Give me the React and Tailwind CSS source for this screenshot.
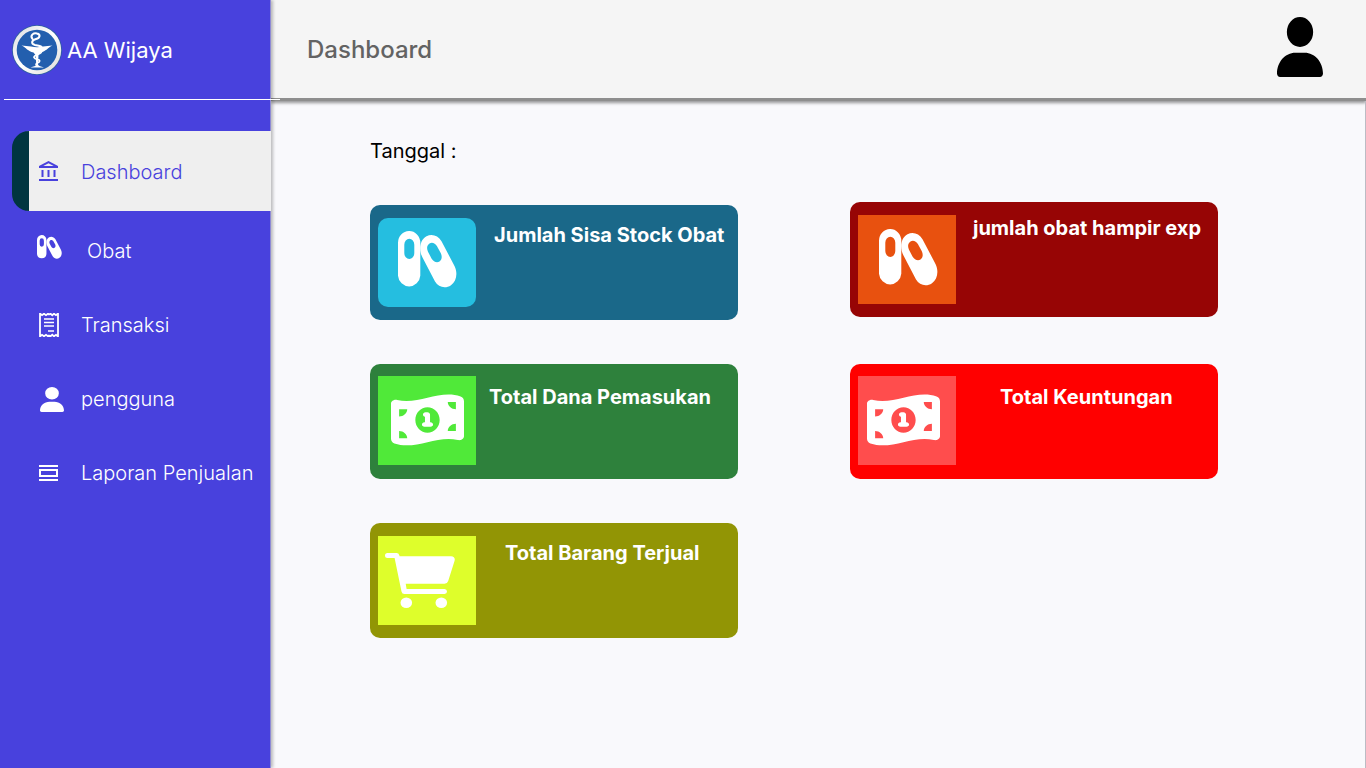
import { FaUser, FaMoneyBill1Wave } from "react-icons/fa6";
import { MdOutlineAccountBalance } from "react-icons/md";

function Logo() {
  return (
    <svg viewBox="0 0 50 50" className="size-[50px] shrink-0" aria-hidden="true">
      <defs>
        <linearGradient id="ring" x1="0" y1="0" x2="1" y2="1">
          <stop offset="0" stopColor="#d9dce0" />
          <stop offset="0.5" stopColor="#ffffff" />
          <stop offset="1" stopColor="#dcdad6" />
        </linearGradient>
      </defs>
      <circle cx="25" cy="25" r="25" fill="#2c5f9e" />
      <circle cx="25" cy="25" r="24.2" fill="url(#ring)" />
      <circle cx="25" cy="25" r="20.3" fill="#235fae" />
      <g fill="none" stroke="#fff" strokeLinecap="round">
        <path d="M20.5 14C17.500 10 22 7.500 25 8.500C29 9.500 28 13 24 14C19 15.500 19 19 23 20C27.500 21 30 20.500 30 24" strokeWidth="2" />
        <path d="M29.500 26C30.500 30 21.500 29 22 32.500C23 35.500 28.500 33.500 27.500 36.500C27 38 24 37.500 24 39.500" strokeWidth="1.700" />
      </g>
      <path d="M9.500 20.500L19 21.500Q25 23 31 21.500L40.500 20.500C36 22.500 34 26.500 28.500 27.500L26.500 30L26 39.500C26.500 41 29 41.500 32 42.500H18.500C21.500 41.500 24 41 24.300 39.500L23.500 30L21.500 27.500C16 26.500 14 22.500 9.500 20.500Z" fill="#fff" />
    </svg>
  );
}

function Capsules({ className }) {
  return (
    <svg viewBox="0 0 59 58" preserveAspectRatio="none" className={className} fill="none" strokeLinecap="round" aria-hidden="true">
      <path
        fill="currentColor"
        fillRule="evenodd"
        d="M11 0A11.200 12 0 0 1 22.300 12V45.500A11.200 12 0 0 1 0 45.500V12A11.200 12 0 0 1 11 0ZM11.300 8A5 6 0 0 0 6.300 14V22.500A5 6 0 0 0 16.300 22.500V14A5 6 0 0 0 11.300 8Z"
      />
      <path
        fill="currentColor"
        fillRule="evenodd"
        d="M28.500 5.300C34 2.500 40 4.500 43.500 10.500L56.500 35.500C60 43 58.500 51 53 55.200C47.500 59 40.500 57.500 37 51.500L24.500 27C20.500 19 21.500 9.500 28.500 5.300ZM31.500 12.600C28.800 14.500 28.500 18 30 21L33.500 28C35.500 31.500 39 32.700 41.500 31C44.200 29 44.200 25.500 42.700 22.500L39 15.500C37.200 12.200 34 11 31.500 12.600Z"
      />
    </svg>
  );
}

function Cart({ className }) {
  return (
    <svg viewBox="0 0 70 56" className={className} fill="currentColor" aria-hidden="true">
      <path
        fillRule="evenodd"
        d="M2.500 0H11.500Q13.800 0 14.300 2.200L14.600 3.300H66Q70.500 3.800 69.600 7.800L63.200 28Q62.300 30.800 59.500 30.800H20.700L21.600 36H59.500A2.500 2.500 0 0 1 59.500 41H19.500Q17 41 16.500 38.500L9.600 5H2.500A2.500 2.500 0 0 1 2.500 0Z"
      />
      <ellipse cx="21.300" cy="49.800" rx="5.800" ry="5.300" />
      <ellipse cx="56.300" cy="49.800" rx="5.800" ry="5.300" />
    </svg>
  );
}

function ReceiptIcon() {
  return (
    <svg viewBox="0 0 20 24" className="h-6 w-5" fill="none" stroke="currentColor" aria-hidden="true">
      <path d="M1 0.500L3 2.200L5 0.700L7 2.200L9 0.700L10 1.500L11.500 0.700L13.300 2.200L15 0.700L17 2.200L19 0.500V23.500L17 21.800L15 23.300L13.300 21.800L11.500 23.300L10 22.500L9 23.300L7 21.800L5 23.300L3 21.800L1 23.500Z" strokeWidth="1.800" />
      <path d="M5 6H15M5 9.500H15M5 13H15M9 18H15" strokeWidth="1.700" />
    </svg>
  );
}

function ReportIcon() {
  return (
    <svg viewBox="0 0 19 16" className="h-4 w-[19px]" fill="none" stroke="currentColor" strokeWidth="2" aria-hidden="true">
      <path d="M0 1H19M0 15H19M1 5H18V11H1Z" />
    </svg>
  );
}

const links = [
  { label: "Obat", icon: <Capsules className="mb-2 -ml-0.5 h-6 w-[25px]" />, pad: "pl-1.5" },
  { label: "Transaksi", icon: <ReceiptIcon />, pad: "" },
  { label: "pengguna", icon: <FaUser preserveAspectRatio="none" className="ml-px h-[25px] w-6" />, pad: "" },
  { label: "Laporan Penjualan", icon: <ReportIcon />, pad: "" },
];

const cards = [
  { title: "Jumlah Sisa Stock Obat", card: "mt-[3px] bg-[#1a6889]", tile: "mt-[13px] rounded-[10px] bg-[#25bee0]", text: "ml-[18px] mt-[18px]", icon: <Capsules className="ml-5 mt-[13px] h-[57px] w-[59px]" /> },
  { title: "jumlah obat hampir exp", card: "bg-[#970505]", tile: "mt-[13px] bg-[#e8510f]", text: "ml-[17px] mt-[14px]", icon: <Capsules className="ml-[21px] mt-[14px] h-[57px] w-[59px]" /> },
  { title: "Total Dana Pemasukan", card: "bg-[#2e813c]", tile: "mt-3 bg-[#50e939]", text: "ml-[13px] mt-[21px]", icon: <FaMoneyBill1Wave preserveAspectRatio="none" className="ml-[13px] mt-[15px] h-[58px] w-[73px]" /> },
  { title: "Total Keuntungan", card: "bg-[#ff0000]", tile: "mt-3 bg-[#ff4d4d]", text: "ml-11 mt-[21px]", icon: <FaMoneyBill1Wave preserveAspectRatio="none" className="ml-[9px] mt-[15px] h-[58px] w-[73px]" /> },
  { title: "Total Barang Terjual", card: "bg-[#929505]", tile: "mt-[13px] bg-[#defe2b]", text: "ml-[29px] mt-[18px]", icon: <Cart className="ml-[7px] mt-[17px] h-14 w-[70px]" /> },
];

export default function App() {
  return (
    <div className="flex min-h-screen bg-[#f9f9fc] font-['Inter',sans-serif]">
      <aside className="z-10 w-[271px] shrink-0 border-r border-[#8f8bd4] bg-[#4841dd] text-white shadow-[2px_0_3px_rgba(0,0,0,0.25)]">
        <div className="flex h-[99px] items-center gap-[5px] pl-3">
          <Logo />
          <span className="text-[22px] leading-8">AA Wijaya</span>
        </div>
        <hr className="ml-1 w-[276px] border-t border-white" />
        <nav className="pt-[31px] text-xl font-light">
          <a href="#dashboard" aria-current="page" className="-mr-px ml-3 flex h-20 items-center rounded-l-[17px] border-l-[17px] border-[#003540] bg-[#efefef] pl-2 pt-0.5 text-[#4841dd]">
            <span className="flex w-11 shrink-0">
              <MdOutlineAccountBalance className="size-6" />
            </span>
            <span>Dashboard</span>
          </a>
          <div className="pt-[3px]">
            {links.map((l) => (
              <a key={l.label} href={"#" + l.label} className="flex h-[74px] items-center pl-[39px]">
                <span className="flex w-[42px] shrink-0">{l.icon}</span>
                <span className={"whitespace-nowrap " + l.pad}>{l.label}</span>
              </a>
            ))}
          </div>
        </nav>
      </aside>
      <div className="flex min-w-0 flex-1 flex-col">
        <header className="flex h-[101px] items-center justify-between border-b-[3px] border-[#8e8e8e] bg-[#f5f5f5] pl-9 pr-[43px] shadow-[0_2px_3px_rgba(0,0,0,0.4)]">
          <h1 className="pt-0.5 text-2xl font-medium text-[#636363]">Dashboard</h1>
          <button type="button" aria-label="Profil" className="text-black">
            <FaUser preserveAspectRatio="none" className="mb-1 h-[60px] w-[46px]" />
          </button>
        </header>
        <main className="flex-1 border-r border-[#bcbcc4] pl-[99px] pr-[147px] pt-9">
          <p className="text-xl leading-7 text-black">Tanggal :</p>
          <div className="mt-[37px] grid grid-cols-[368px_368px] items-start justify-between gap-y-11">
            {cards.map((c) => (
              <section key={c.title} className={"flex h-[115px] items-start rounded-[10px] pl-2 text-white " + c.card}>
                <div className={"h-[89px] w-[98px] shrink-0 " + c.tile}>{c.icon}</div>
                <h2 className={"whitespace-nowrap text-xl leading-6 font-bold " + c.text}>{c.title}</h2>
              </section>
            ))}
          </div>
        </main>
      </div>
    </div>
  );
}
